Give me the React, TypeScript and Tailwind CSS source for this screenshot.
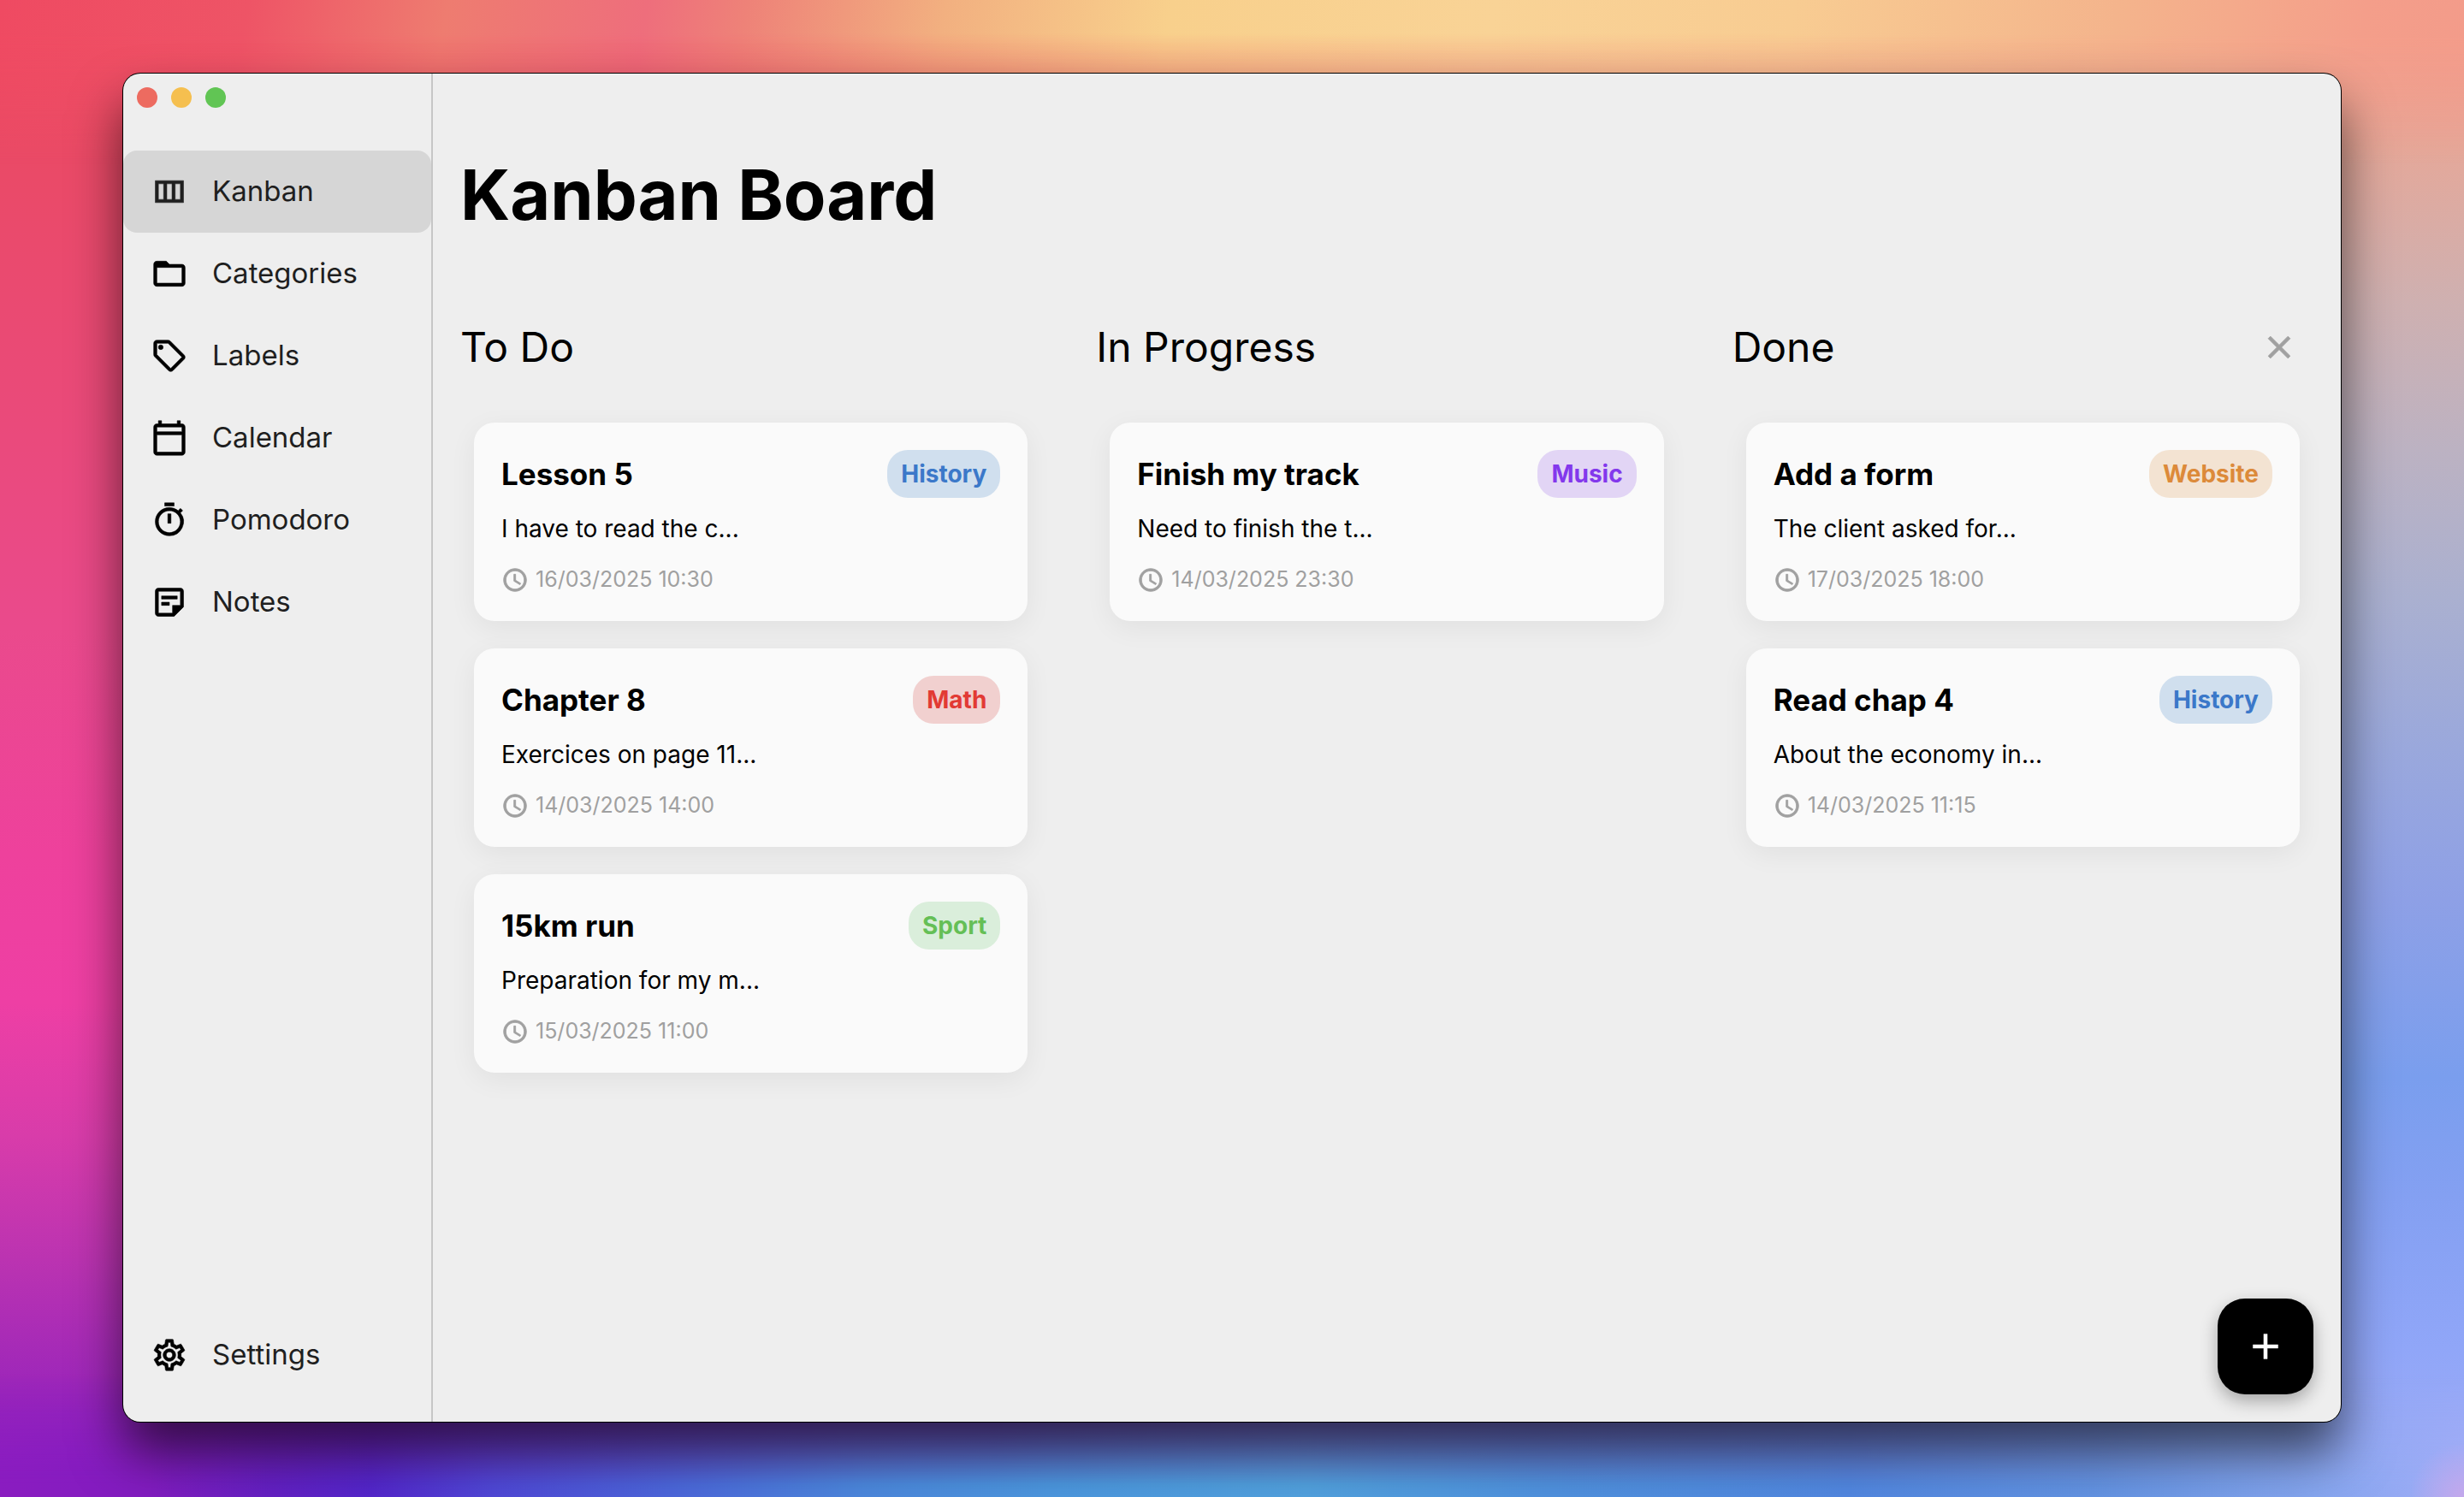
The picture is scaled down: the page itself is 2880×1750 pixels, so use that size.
import type { IconType } from "react-icons";
import {
  MdAccessTime,
  MdAdd,
  MdClose,
  MdFolderOpen,
  MdOutlineCalendarToday,
  MdOutlineSell,
  MdOutlineSettings,
  MdOutlineStickyNote2,
  MdOutlineTimer,
  MdOutlineViewColumn,
} from "react-icons/md";

type NavEntry = { label: string; icon: IconType; active?: boolean };

const navEntries: NavEntry[] = [
  { label: "Kanban", icon: MdOutlineViewColumn, active: true },
  { label: "Categories", icon: MdFolderOpen },
  { label: "Labels", icon: MdOutlineSell },
  { label: "Calendar", icon: MdOutlineCalendarToday },
  { label: "Pomodoro", icon: MdOutlineTimer },
  { label: "Notes", icon: MdOutlineStickyNote2 },
];

const tagStyles = {
  History: "bg-[#d0dfee] text-[#3b78c9]",
  Math: "bg-[#f1d0cf] text-[#e23a34]",
  Sport: "bg-[#daeedb] text-[#65bf56]",
  Music: "bg-[#e2d5f5] text-[#8338ec]",
  Website: "bg-[#f3e3d2] text-[#dc8a3a]",
};

type Task = { title: string; tag: keyof typeof tagStyles; text: string; date: string };
type ColumnData = { name: string; clearable?: boolean; tasks: Task[] };

const columns: ColumnData[] = [
  {
    name: "To Do",
    tasks: [
      { title: "Lesson 5", tag: "History", text: "I have to read the c...", date: "16/03/2025 10:30" },
      { title: "Chapter 8", tag: "Math", text: "Exercices on page 11...", date: "14/03/2025 14:00" },
      { title: "15km run", tag: "Sport", text: "Preparation for my m...", date: "15/03/2025 11:00" },
    ],
  },
  {
    name: "In Progress",
    tasks: [{ title: "Finish my track", tag: "Music", text: "Need to finish the t...", date: "14/03/2025 23:30" }],
  },
  {
    name: "Done",
    clearable: true,
    tasks: [
      { title: "Add a form", tag: "Website", text: "The client asked for...", date: "17/03/2025 18:00" },
      { title: "Read chap 4", tag: "History", text: "About the economy in...", date: "14/03/2025 11:15" },
    ],
  },
];

function Wallpaper() {
  return (
    <div aria-hidden="true" className="absolute inset-0 -z-10">
      <div className="absolute inset-0 bg-[linear-gradient(to_bottom,#ee4a62_0%,#ea4a66_10%,#ea4a78_26%,#ea4a8c_42%,#ee419c_57%,#ee3fa4_67%,#d83caa_76%,#b832b2_85%,#9c26ba_93%,#881cc0_100%)]" />
      <div className="absolute inset-0 bg-[linear-gradient(to_bottom,#f39b8a_0%,#e4a89a_10%,#cfb0b0_20%,#bcb2c2_30%,#aab0d0_40%,#9aa8dc_50%,#8ea0e6_60%,#7a9eee_72%,#84a0f2_80%,#90a6f8_90%,#a0acf6_100%)] [mask-image:linear-gradient(to_right,transparent_40%,black_90%)]" />
      <div className="absolute inset-x-0 top-0 h-48 bg-[linear-gradient(100deg,#ef4a62_0%,#ee5466_10%,#ee7c70_18%,#ee6e7c_26%,#ee8278_30%,#f2b080_38%,#f8d08c_47%,#f9d396_60%,#f8cc92_72%,#f4b48c_85%,#f49e8a_95%,#f39b8a_100%)] [mask-image:linear-gradient(to_bottom,black_20%,transparent)]" />
      <div className="absolute inset-x-0 bottom-0 h-36 bg-[linear-gradient(to_right,#8a1cc0_0%,#821cc0_6%,#6420c4_11%,#5426cc_15%,#5048d8_20%,#4c66dc_27%,#4c88de_35%,#4c98e0_43%,#52a2e0_53%,#5092e0_63%,#5288e2_75%,#6494e4_85%,#86a6f0_94%,#a0acf6_100%)] [mask-image:linear-gradient(to_top,black_10%,transparent)]" />
      <div className="absolute bottom-0 right-0 size-16 bg-[radial-gradient(circle_at_bottom_right,#c4a8ec_0%,transparent_70%)]" />
    </div>
  );
}

function NavButton({ label, icon: Icon, active = false }: NavEntry) {
  return (
    <button
      type="button"
      aria-current={active ? "page" : undefined}
      className={`flex h-24 w-full items-center gap-7 rounded-2xl px-8 text-left text-[33px] text-[#1f1f1f] ${
        active ? "bg-[#d6d6d6]" : ""
      }`}
    >
      <Icon size={44} strokeWidth={0.3} className={active ? "text-[#1f1f1f]" : "text-black"} />
      {label}
    </button>
  );
}

function Sidebar() {
  return (
    <aside className="flex w-[362px] shrink-0 flex-col border-r-2 border-[#c6c6c6] pb-[30px]">
      <div className="flex gap-4 p-4">
        <button type="button" aria-label="Close window" className="size-6 rounded-full bg-[#ed6b60]" />
        <button type="button" aria-label="Minimize window" className="size-6 rounded-full bg-[#f5bf4f]" />
        <button type="button" aria-label="Zoom window" className="size-6 rounded-full bg-[#61c554]" />
      </div>
      <nav className="mt-[34px] flex flex-1 flex-col">
        {navEntries.map((entry) => (
          <NavButton key={entry.label} {...entry} />
        ))}
        <div className="mt-auto">
          <NavButton label="Settings" icon={MdOutlineSettings} />
        </div>
      </nav>
    </aside>
  );
}

function TaskCard({ title, tag, text, date }: Task) {
  return (
    <article className="rounded-3xl bg-[#fafafa] p-8 shadow-[0_8px_32px_rgba(0,0,0,0.06)]">
      <div className="flex h-14 items-center justify-between">
        <h3 className="text-[35px] font-bold">{title}</h3>
        <span className={`flex h-14 items-center rounded-3xl px-4 text-[28px] font-bold ${tagStyles[tag]}`}>{tag}</span>
      </div>
      <p className="mt-4 text-[28px] leading-10">{text}</p>
      <div className="mt-6 flex h-8 items-center gap-2 text-[25px] text-[#a0a0a0]">
        <MdAccessTime size={32} strokeWidth={0.6} />
        <time>{date}</time>
      </div>
    </article>
  );
}

function Column({ name, clearable, tasks }: ColumnData) {
  return (
    <section>
      <header className="flex h-20 items-center justify-between">
        <h2 className="text-[48px] leading-none">{name}</h2>
        {clearable && (
          <button type="button" aria-label={`Clear ${name}`} className="flex size-20 items-center justify-center text-[#a0a0a0]">
            <MdClose size={44} strokeWidth={0.5} />
          </button>
        )}
      </header>
      <div className="mt-12 flex flex-col gap-8 px-4">
        {tasks.map((task) => (
          <TaskCard key={task.title} {...task} />
        ))}
      </div>
    </section>
  );
}

export default function App() {
  return (
    <div className="relative isolate flex min-h-screen px-36 pt-[86px] pb-[88px] font-['Inter',sans-serif] text-black [&_path[fill=none]]:stroke-none">
      <Wallpaper />
      <div className="relative flex flex-1 overflow-hidden rounded-[20px] bg-[#eeeeee] shadow-[0_0_0_1px_#000,0_36px_60px_rgba(0,0,0,0.62)]">
        <Sidebar />
        <main className="flex-1 px-8 pt-[94px]">
          <h1 className="text-[81px] leading-[96px] font-bold">Kanban Board</h1>
          <div className="mt-[90px] grid grid-cols-3 gap-16">
            {columns.map((column) => (
              <Column key={column.name} {...column} />
            ))}
          </div>
        </main>
        <button
          type="button"
          aria-label="Add task"
          className="absolute right-8 bottom-8 flex size-28 items-center justify-center rounded-[32px] bg-black text-white shadow-[0_8px_20px_rgba(0,0,0,0.3)]"
        >
          <MdAdd size={50} strokeWidth={0.2} />
        </button>
      </div>
    </div>
  );
}
